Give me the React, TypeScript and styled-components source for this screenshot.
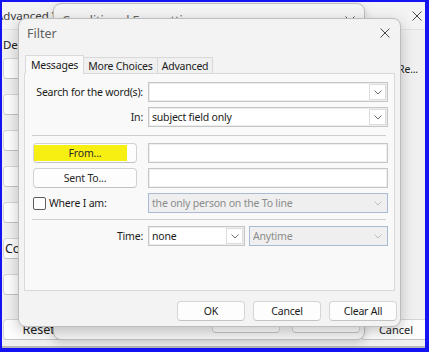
import React from "react";
import styled, { createGlobalStyle } from "styled-components";

const GlobalStyle = createGlobalStyle`
  html, body {
    margin: 0;
    padding: 0;
    background: #ffffff;
  }
  body {
    font-family: "Noto Sans", "Open Sans", sans-serif;
    font-size: 10.5px;
    letter-spacing: -0.2px;
    color: #1b1b1b;
  }
  * {
    box-sizing: border-box;
  }
`;

const CloseIcon = () => (
  <svg width="10" height="10" viewBox="0 0 10 10">
    <path d="M0.5 0.5L9.5 9.5M9.5 0.5L0.5 9.5" stroke="#4a4a4a" strokeWidth="1" fill="none" />
  </svg>
);

const Chevron = ({ faded }: { faded?: boolean }) => (
  <svg width="8" height="5" viewBox="0 0 8 5">
    <path d="M0.5 0.5L4 4L7.5 0.5" stroke={faded ? "#bdbdbd" : "#707070"} strokeWidth="1" fill="none" />
  </svg>
);

type ComboProps = { value: string; disabled?: boolean; width?: number };

const Combo: React.FC<ComboProps> = ({ value, disabled, width }) => (
  <ComboBox $disabled={disabled} $width={width}>
    <ComboText>{value}</ComboText>
    <DropButton $disabled={disabled}>
      <Chevron faded={disabled} />
    </DropButton>
  </ComboBox>
);

export default function App() {
  return (
    <>
      <GlobalStyle />
      <Frame>
        <BackWindow>
          <BackTitleBar>
            <span className="title">Advanced View Settings: Compact</span>
            <CloseIcon />
          </BackTitleBar>
          <BackBody>
            <DescHeading>Description</DescHeading>
            <BackRows>
              {[
                ["Columns...", "Re..."],
                ["Group By...", ""],
                ["Sort...", ""],
                ["Filter...", ""],
                ["Other Settings...", ""],
                ["Conditional Formatting...", ""],
                ["Format Columns...", ""],
              ].map(([label, value]) => (
                <React.Fragment key={label}>
                  <BackButton>{label}</BackButton>
                  <BackValue>{value}</BackValue>
                </React.Fragment>
              ))}
            </BackRows>
            <BackFooter>
              <BackButton>Reset Current View</BackButton>
              <BackFooterRight>
                <BackButton $small>OK</BackButton>
                <BackButton $small>Cancel</BackButton>
              </BackFooterRight>
            </BackFooter>
          </BackBody>
        </BackWindow>

        <CondDialog>
          <DialogTitleBar $height={33} $padLeft={8} $padRight={9}>
            <DialogTitle>Conditional Formatting</DialogTitle>
            <CloseIcon />
          </DialogTitleBar>
          <DialogSpacer />
          <DialogFooter $gap={12} $padRight={4} $padBottom={6}>
            <PushButton>OK</PushButton>
            <PushButton>Cancel</PushButton>
          </DialogFooter>
        </CondDialog>

        <FilterDialog>
          <DialogTitleBar $height={28} $padLeft={8} $padRight={10}>
            <DialogTitle>Filter</DialogTitle>
            <CloseIcon />
          </DialogTitleBar>
          <FilterBody>
            <TabStrip>
              <Tab $active>Messages</Tab>
              <Tab>More Choices</Tab>
              <Tab>Advanced</Tab>
            </TabStrip>
            <TabPanel>
              <FormGrid>
                <FieldLabel>Search for the word(s):</FieldLabel>
                <Combo value="" />
                <FieldLabel>In:</FieldLabel>
                <Combo value="subject field only" />
                <Separator $mt={3} $mb={2} />
                <SideButton $highlight>
                  <span>From...</span>
                </SideButton>
                <TextInput />
                <SideButton>
                  <span>Sent To...</span>
                </SideButton>
                <TextInput />
                <CheckRow>
                  <CheckBox />
                  <span>Where I am:</span>
                </CheckRow>
                <Combo value="the only person on the To line" disabled />
                <Separator $mt={1} $mb={1} />
                <FieldLabel>Time:</FieldLabel>
                <TimeRow>
                  <Combo value="none" width={97} />
                  <Combo value="Anytime" disabled />
                </TimeRow>
              </FormGrid>
            </TabPanel>
          </FilterBody>
          <DialogFooter $gap={8} $padRight={3} $padBottom={5}>
            <PushButton>OK</PushButton>
            <PushButton>Cancel</PushButton>
            <PushButton>Clear All</PushButton>
          </DialogFooter>
        </FilterDialog>
      </Frame>
    </>
  );
}

const Frame = styled.div`
  position: relative;
  width: 429px;
  height: 352px;
  border-style: solid;
  border-color: #1414f2;
  border-width: 2px 4px 4px 2px;
  overflow: hidden;
  background: #f0f0f0;
`;

const BackWindow = styled.div`
  display: flex;
  flex-direction: column;
  height: 100%;
  background: #f0f0f0;
  border-bottom: 2px solid #b7b7b7;
`;

const BackTitleBar = styled.div`
  display: flex;
  align-items: center;
  justify-content: space-between;
  height: 28px;
  padding-right: 3px;
  background: #f3f3f3;
  border-bottom: 1px solid #e2e2e2;

  > .title {
    font-size: 11.5px;
    letter-spacing: 0;
    color: #3c3c3c;
    margin-left: -6px;
    white-space: nowrap;
  }
`;

const BackBody = styled.div`
  flex: 1;
  display: flex;
  flex-direction: column;
  padding: 0 0 6px 1px;
`;

const DescHeading = styled.div`
  font-size: 11.5px;
  line-height: 14px;
  padding-top: 8px;
  color: #222;
`;

const BackRows = styled.div`
  display: grid;
  grid-template-columns: 150px 1fr;
  grid-auto-rows: 21px;
  row-gap: 15px;
  margin-top: 6px;
  align-items: center;
`;

const BackButton = styled.div<{ $small?: boolean }>`
  width: ${p => (p.$small ? "70px" : "150px")};
  height: 21px;
  display: flex;
  align-items: center;
  justify-content: center;
  white-space: nowrap;
  font-size: 12.5px;
  letter-spacing: 0;
  color: #222;
  background: #fdfdfd;
  border: 1px solid #d4d4d4;
  border-bottom-color: #c4c4c4;
  border-radius: 4px;
`;

const BackValue = styled.div`
  text-align: right;
  padding-right: 7px;
  color: #222;
`;

const BackFooter = styled.div`
  margin-top: auto;
  display: flex;
  justify-content: space-between;
  align-items: flex-end;
`;

const BackFooterRight = styled.div`
  display: flex;
  gap: 10px;
  margin-right: -6px;

  > div {
    font-size: 11px;
  }
`;

const DialogBase = styled.div`
  position: absolute;
  display: flex;
  flex-direction: column;
  background: #f3f3f3;
  border: 1px solid #bdbdbd;
  border-radius: 8px;
  box-shadow: 0 3px 10px rgba(0, 0, 0, 0.16);
`;

const CondDialog = styled(DialogBase)`
  left: 51px;
  top: 1px;
  width: 312px;
  height: 337px;
`;

const FilterDialog = styled(DialogBase)`
  left: 16px;
  top: 16px;
  width: 383px;
  height: 309px;
  box-shadow: 0 4px 14px rgba(0, 0, 0, 0.22);
`;

const DialogTitleBar = styled.div<{ $height: number; $padLeft: number; $padRight: number }>`
  display: flex;
  align-items: center;
  justify-content: space-between;
  height: ${p => p.$height}px;
  flex: none;
  padding: 0 ${p => p.$padRight}px 0 ${p => p.$padLeft}px;
`;

const DialogTitle = styled.span`
  font-size: 12.5px;
  letter-spacing: 0;
  color: #606060;
`;

const DialogSpacer = styled.div`
  flex: 1;
`;

const DialogFooter = styled.div<{ $gap: number; $padRight: number; $padBottom: number }>`
  display: flex;
  justify-content: flex-end;
  gap: ${p => p.$gap}px;
  padding: 0 ${p => p.$padRight}px ${p => p.$padBottom}px 0;
`;

const PushButton = styled.div`
  width: 68px;
  height: 20px;
  display: flex;
  align-items: center;
  justify-content: center;
  color: #1b1b1b;
  background: #fdfdfd;
  border: 1px solid #d5d5d5;
  border-bottom-color: #c3c3c3;
  border-radius: 4px;
`;

const FilterBody = styled.div`
  flex: 1;
  padding: 8px 5px 10px 5px;
  display: flex;
  flex-direction: column;
`;

const TabStrip = styled.div`
  display: flex;
  align-items: flex-end;
  height: 19px;
  padding-left: 1px;
  position: relative;
  z-index: 1;
  margin-bottom: -1px;
`;

const Tab = styled.div<{ $active?: boolean }>`
  height: ${p => (p.$active ? "19px" : "17px")};
  padding: 0 ${p => (p.$active ? "5px" : "4px")};
  display: flex;
  align-items: center;
  white-space: nowrap;
  color: #1b1b1b;
  background: ${p => (p.$active ? "#f9f9f9" : "#f0f0f0")};
  border: 1px solid #d9d9d9;
  border-bottom: ${p => (p.$active ? "1px solid #f9f9f9" : "1px solid #d9d9d9")};
  margin-left: ${p => (p.$active ? "0" : "-1px")};
`;

const TabPanel = styled.div`
  flex: 1;
  background: #f9f9f9;
  border: 1px solid #d9d9d9;
  padding: 8px 6px 0 8px;
`;

const FormGrid = styled.div`
  display: grid;
  grid-template-columns: 110px 1fr;
  column-gap: 5px;
  row-gap: 5px;
  align-items: center;
`;

const FieldLabel = styled.div`
  text-align: right;
  white-space: nowrap;
  color: #1b1b1b;
`;

const ComboBox = styled.div<{ $disabled?: boolean; $width?: number }>`
  display: flex;
  align-items: center;
  height: 20px;
  ${p => (p.$width ? `width: ${p.$width}px; flex: none;` : "flex: 1;")}
  min-width: 0;
  padding-left: 3px;
  padding-right: 1px;
  color: ${p => (p.$disabled ? "#8c8c8c" : "#1b1b1b")};
  background: ${p => (p.$disabled ? "#efefef" : "#ffffff")};
  border: 1px solid ${p => (p.$disabled ? "#a9bbd5" : "#c6c6c6")};
  box-shadow: ${p => (p.$disabled ? "none" : "inset 0 0 0 1px #ededed")};
`;

const ComboText = styled.span`
  flex: 1;
  white-space: nowrap;
  overflow: hidden;
`;

const DropButton = styled.span<{ $disabled?: boolean }>`
  width: 17px;
  height: 16px;
  display: flex;
  align-items: center;
  justify-content: center;
  background: ${p => (p.$disabled ? "transparent" : "#ffffff")};
  border: 1px solid ${p => (p.$disabled ? "transparent" : "#dddddd")};
`;

const Separator = styled.div<{ $mt: number; $mb: number }>`
  grid-column: 1 / -1;
  height: 1px;
  margin: ${p => p.$mt}px 2px ${p => p.$mb}px -1px;
  background: #cfcfcf;
`;

const SideButton = styled.div<{ $highlight?: boolean }>`
  position: relative;
  width: 104px;
  height: 20px;
  display: flex;
  align-items: center;
  justify-content: center;
  color: #2a2a2a;
  background: #fdfdfd;
  border: 1px solid #d2d2d2;
  border-bottom-color: #c2c2c2;
  border-radius: 4px;

  &::before {
    content: "";
    display: ${p => (p.$highlight ? "block" : "none")};
    position: absolute;
    left: 0;
    right: 9px;
    top: 1px;
    bottom: 1px;
    background: #f8ef12;
  }

  > span {
    position: relative;
  }
`;

const TextInput = styled.div`
  height: 20px;
  background: #ffffff;
  border: 1px solid #c6c6c6;
  box-shadow: inset 0 0 0 1px #efefef;
`;

const CheckRow = styled.div`
  display: flex;
  align-items: center;
  gap: 3px;
  white-space: nowrap;
`;

const CheckBox = styled.span`
  width: 13px;
  height: 13px;
  border: 1px solid #5e5e5e;
  border-radius: 2px;
  background: #ffffff;
`;

const TimeRow = styled.div`
  display: flex;
  gap: 4px;
`;
